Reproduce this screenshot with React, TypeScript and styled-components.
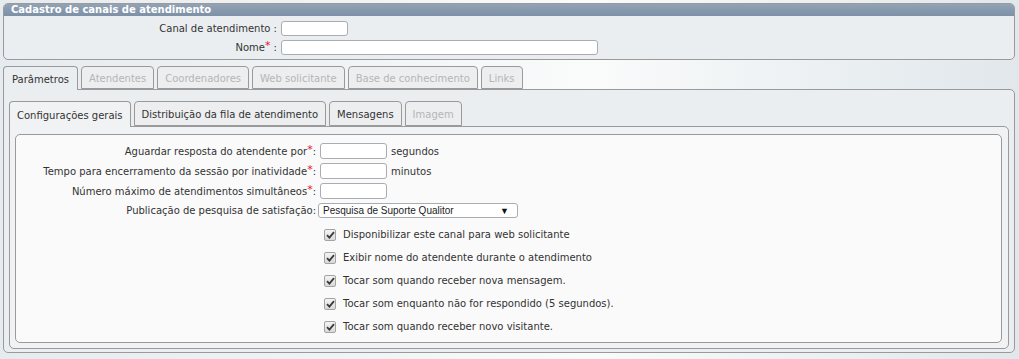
import React from 'react'
import styled, { createGlobalStyle } from 'styled-components'

const GlobalStyle = createGlobalStyle`
  html, body {
    margin: 0;
    padding: 0;
  }
  body {
    width: 1019px;
    height: 359px;
    overflow: hidden;
    font-family: 'DejaVu Sans', Verdana, sans-serif;
    font-size: 10px;
    color: #333;
    background: linear-gradient(90deg, #e6ebef 0%, #f1f4f6 35%, #fafbfb 58%, #e9eef1 85%, #e1e7eb 100%);
  }
`

const Page = styled.div`
  padding: 3px 4px 0 3px;
  display: flex;
  flex-direction: column;
  gap: 6px;
`

const Panel = styled.div`
  border: 1px solid #9a9a9a;
  border-radius: 5px;
  background: #ebeef0;
  overflow: hidden;
`

const PanelHeader = styled.div`
  height: 12px;
  line-height: 12px;
  padding-left: 7px;
  background: linear-gradient(#93a3b5, #7d90a6);
  color: #fff;
  font-weight: bold;
  font-size: 10px;
`

const TopForm = styled.div`
  display: grid;
  grid-template-columns: 273px 1fr;
  column-gap: 4px;
  row-gap: 4px;
  padding: 5px 0 4px;
  align-items: center;
`

const Label = styled.label`
  text-align: right;
  white-space: nowrap;
  color: #333;
`

const Req = styled.span`
  color: #e4141a;
  font-size: 11px;
  position: relative;
  top: -2px;
`

const TextInput = styled.input<{ $w: number; $h?: number }>`
  width: ${(p) => p.$w}px;
  height: ${(p) => p.$h ?? 16}px;
  box-sizing: border-box;
  border: 1px solid #a9adb1;
  border-radius: 3px;
  background: #fff;
  padding: 0 3px;
  margin: 0;
  font: inherit;
`

const TabArea = styled.div`
  display: flex;
  flex-direction: column;
`

const TabRow = styled.div<{ $inner?: boolean }>`
  display: flex;
  gap: 3px;
  height: ${(p) => (p.$inner ? 25 : 23)}px;
  position: relative;
  z-index: 1;
`

const Tab = styled.div<{ $active?: boolean; $disabled?: boolean; $inner?: boolean }>`
  box-sizing: border-box;
  height: ${(p) => (p.$inner ? (p.$active ? 26 : 25) : p.$active ? 24 : 23)}px;
  padding: 0 ${(p) => (p.$inner ? 7 : p.$active ? 8 : 7)}px;
  display: flex;
  align-items: center;
  justify-content: center;
  border: 1px solid #9a9a9a;
  border-bottom: ${(p) => (p.$active ? 'none' : '1px solid #9a9a9a')};
  border-radius: 4px 4px 0 0;
  background: ${(p) => (p.$active ? (p.$inner ? '#f1f2f3' : '#ebeef0') : '#eceeef')};
  color: ${(p) => (p.$disabled ? '#b4b6b8' : '#333')};
  white-space: nowrap;
  padding-top: ${(p) => (p.$inner ? 2 : 1)}px;
`

const TabPanel = styled.div`
  border: 1px solid #9a9a9a;
  border-radius: 0 5px 5px 5px;
  background: #ebeef0;
  padding: 11px 5px 5px 5px;
  height: 264px;
  box-sizing: border-box;
`

const InnerPanel = styled.div`
  border: 1px solid #9a9a9a;
  border-radius: 0 5px 5px 5px;
  background: #f1f2f3;
  padding: 7px 6px 5px 5px;
`

const FieldBox = styled.div`
  border: 1px solid #9a9a9a;
  border-radius: 5px;
  background: #fafafa;
  height: 209px;
  box-sizing: border-box;
  padding-top: 8px;
`

const FormGrid = styled.div`
  display: grid;
  grid-template-columns: 300px 1fr;
  column-gap: 4px;
  row-gap: 4px;
  align-items: center;
`

const FieldLine = styled.div`
  display: flex;
  align-items: center;
  gap: 4px;
`

const Select = styled.div`
  width: 200px;
  height: 15px;
  box-sizing: border-box;
  margin-left: -2px;
  border: 1px solid #a9adb1;
  border-radius: 3px;
  background: #fff;
  display: flex;
  align-items: center;
  justify-content: space-between;
  padding: 0 8px 0 4px;
  font-family: 'Liberation Sans', Arial, sans-serif;
  font-size: 10px;
  color: #222;
`

const Arrow = styled.span`
  font-size: 9px;
  color: #111;
`

const CheckList = styled.div`
  display: flex;
  flex-direction: column;
  gap: 10px;
  padding: 10px 0 0 308px;
`

const CheckRow = styled.div`
  display: flex;
  align-items: center;
  gap: 7px;
  height: 13px;
`

const Box = styled.span`
  width: 12px;
  height: 12px;
  box-sizing: border-box;
  border: 1px solid #a3a3a3;
  border-radius: 2px;
  background: linear-gradient(#f4f4f4, #d9d9d9);
  display: flex;
  align-items: center;
  justify-content: center;
`

const Check = () => (
  <Box>
    <svg width="9" height="8" viewBox="0 0 9 8">
      <path d="M1 4.2 L3.4 6.6 L8 1.2" stroke="#3a3a3a" strokeWidth="1.8" fill="none" />
    </svg>
  </Box>
)

const outerTabs = [
  { label: 'Parâmetros', active: true },
  { label: 'Atendentes', disabled: true },
  { label: 'Coordenadores', disabled: true },
  { label: 'Web solicitante', disabled: true },
  { label: 'Base de conhecimento', disabled: true },
  { label: 'Links', disabled: true },
]

const innerTabs = [
  { label: 'Configurações gerais', active: true },
  { label: 'Distribuição da fila de atendimento' },
  { label: 'Mensagens' },
  { label: 'Imagem', disabled: true },
]

const checks = [
  'Disponibilizar este canal para web solicitante',
  'Exibir nome do atendente durante o atendimento',
  'Tocar som quando receber nova mensagem.',
  'Tocar som enquanto não for respondido (5 segundos).',
  'Tocar som quando receber novo visitante.',
]

export default function App() {
  return (
    <>
      <GlobalStyle />
      <Page>
        <Panel>
          <PanelHeader>Cadastro de canais de atendimento</PanelHeader>
          <TopForm>
            <Label>Canal de atendimento :</Label>
            <TextInput $w={67} $h={15} />
            <Label>
              Nome<Req>*</Req> :
            </Label>
            <TextInput $w={317} $h={15} />
          </TopForm>
        </Panel>

        <TabArea>
          <TabRow>
            {outerTabs.map((t) => (
              <Tab key={t.label} $active={t.active} $disabled={t.disabled}>
                {t.label}
              </Tab>
            ))}
          </TabRow>
          <TabPanel>
            <TabArea>
              <TabRow $inner>
                {innerTabs.map((t) => (
                  <Tab key={t.label} $inner $active={t.active} $disabled={t.disabled}>
                    {t.label}
                  </Tab>
                ))}
              </TabRow>
              <InnerPanel>
                <FieldBox>
                  <FormGrid>
                    <Label>
                      Aguardar resposta do atendente por<Req>*</Req>:
                    </Label>
                    <FieldLine>
                      <TextInput $w={67} />
                      <span>segundos</span>
                    </FieldLine>
                    <Label>
                      Tempo para encerramento da sessão por inatividade<Req>*</Req>:
                    </Label>
                    <FieldLine>
                      <TextInput $w={67} />
                      <span>minutos</span>
                    </FieldLine>
                    <Label>
                      Número máximo de atendimentos simultâneos<Req>*</Req>:
                    </Label>
                    <FieldLine>
                      <TextInput $w={67} />
                    </FieldLine>
                    <Label>Publicação de pesquisa de satisfação:</Label>
                    <FieldLine>
                      <Select>
                        <span>Pesquisa de Suporte Qualitor</span>
                        <Arrow>▼</Arrow>
                      </Select>
                    </FieldLine>
                  </FormGrid>
                  <CheckList>
                    {checks.map((c) => (
                      <CheckRow key={c}>
                        <Check />
                        <span>{c}</span>
                      </CheckRow>
                    ))}
                  </CheckList>
                </FieldBox>
              </InnerPanel>
            </TabArea>
          </TabPanel>
        </TabArea>
      </Page>
    </>
  )
}
